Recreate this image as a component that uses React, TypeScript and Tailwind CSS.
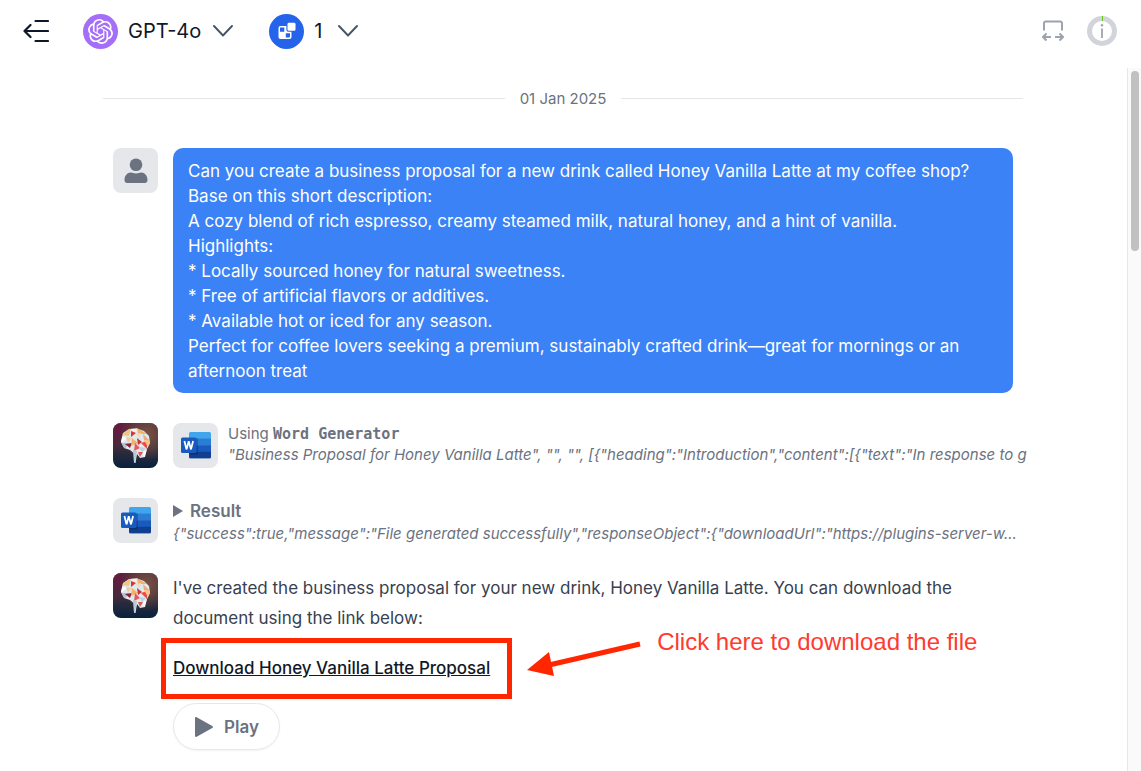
import React from 'react';
import { SiOpenai } from 'react-icons/si';

const WordIcon = () => (
  <svg viewBox="0 0 30 27" className="w-[30px] h-[27px]" aria-hidden="true">
    <defs>
      <clipPath id="word-page">
        <rect x="8" y="0" width="22" height="26.5" rx="1.5" />
      </clipPath>
    </defs>
    <g clipPath="url(#word-page)">
      <rect x="8" y="0" width="22" height="7" fill="#41a5ee" />
      <rect x="8" y="6.6" width="22" height="7" fill="#2b7cd3" />
      <rect x="8" y="13.2" width="22" height="7" fill="#185abd" />
      <rect x="8" y="19.8" width="22" height="7" fill="#103f91" />
      <path d="M8 6H15.5Q17 6 17 7.5V21Q17 22.5 15.5 22.5H8Z" fill="#000" opacity=".22" />
    </g>
    <rect x="0" y="5.5" width="15.5" height="15.5" rx="1.5" fill="#185abd" />
    <path d="M3.4 9 5.5 17.4 7.75 9.3 10 17.4 12.1 9" fill="none" stroke="#fff" strokeWidth="1.8" strokeLinejoin="bevel" />
  </svg>
);

const BrainIcon = () => (
  <svg viewBox="0 0 45 45" className="size-[45px] shrink-0 rounded-lg" role="img" aria-label="Assistant">
    <defs>
      <linearGradient id="brain-bg" x1="0" y1="0" x2="0" y2="1">
        <stop offset="0" stopColor="#46293a" />
        <stop offset=".5" stopColor="#3a2e3b" />
        <stop offset="1" stopColor="#07213d" />
      </linearGradient>
      <radialGradient id="brain-wine" cx=".1" cy=".12" r=".55">
        <stop offset="0" stopColor="#651c40" />
        <stop offset="1" stopColor="#651c40" stopOpacity="0" />
      </radialGradient>
      <radialGradient id="brain-warm" cx=".75" cy=".25" r=".6">
        <stop offset="0" stopColor="#7b5142" />
        <stop offset="1" stopColor="#7b5142" stopOpacity="0" />
      </radialGradient>
      <clipPath id="brain-shape">
        <path d="M10 10 16 6 24 5.5 31 8 36 13 37 20 34 26 32 34 27 35 24 31 22.5 40H21L20.5 30 17 27 11 25 8 19Z" />
      </clipPath>
    </defs>
    <rect width="45" height="45" fill="url(#brain-bg)" />
    <rect width="45" height="45" fill="url(#brain-wine)" />
    <rect width="45" height="45" fill="url(#brain-warm)" />
    <g clipPath="url(#brain-shape)">
      <rect width="45" height="45" fill="#dfe9ee" />
      <path d="M8 12 18 5 16 13Z" fill="#f3c57b" />
      <path d="M18 5 26 5 21 12Z" fill="#f7ede2" />
      <path d="M24 5 34 11 25 11Z" fill="#efb36e" />
      <path d="M18 8 23 10 18 14Z" fill="#d8323a" />
      <path d="M23 11 28 10 27 16Z" fill="#f0d9c2" />
      <path d="M30 11 37 18 31 17Z" fill="#f3a877" />
      <path d="M8 13 14 15 8 20Z" fill="#fff" />
      <path d="M13 14 19 15 15 20Z" fill="#f4c9a0" />
      <path d="M8 20 16 20 12 26Z" fill="#a9c5d2" />
      <path d="M12 21 19 20 17 25Z" fill="#8c2140" />
      <path d="M19 15 25 20 18 23Z" fill="#f3b268" />
      <path d="M24 15 29 19 25 22Z" fill="#d42f39" />
      <path d="M22 20 27 25 21 28Z" fill="#e9585a" />
      <path d="M28 20 34 18 34 26Z" fill="#eb4b45" />
      <path d="M31 17 38 18 35 24Z" fill="#f6c489" />
      <path d="M26 24 33 25 29 29Z" fill="#b9d4df" />
      <path d="M25 29 30 29 27 34Z" fill="#e45452" />
      <path d="M30 29 34 27 31 35Z" fill="#fff" />
      <path d="M20 27 24 28 22 40 20 40Z" fill="#b7cbd9" />
    </g>
  </svg>
);

const UserIcon = () => (
  <svg viewBox="0 0 24 26" className="w-6 h-[26px] fill-[#6b7280]" aria-hidden="true">
    <circle cx="12" cy="6.8" r="6.3" />
    <path d="M.5 22.3C.5 17.8 3.2 14.6 6.8 14.6c1.9 0 2.9.8 5.2.8s3.300-.8 5.2-.8c3.600 0 6.300 3.200 6.300 7.700 0 1.600-1.100 2.700-2.700 2.700H3.200C1.600 25 .5 23.900.5 22.300Z" />
  </svg>
);

const ChevronIcon = () => (
  <svg viewBox="0 0 20 12" className="w-5 h-3 fill-none stroke-[#475569]" aria-hidden="true">
    <path d="M1 1 10 10.5 19 1" strokeWidth="1.9" strokeLinecap="round" strokeLinejoin="round" />
  </svg>
);

const Avatar: React.FC<{ children: React.ReactNode }> = ({ children }) => (
  <div className="size-[45px] shrink-0 rounded-lg bg-gray-200 flex items-center justify-center">
    {children}
  </div>
);

const Row: React.FC<{ avatar: React.ReactNode; children: React.ReactNode }> = ({ avatar, children }) => (
  <div className="flex items-start gap-[15px]">
    {avatar}
    <div className="min-w-0 flex-1">{children}</div>
  </div>
);

const prompt = [
  'Can you create a business proposal for a new drink called Honey Vanilla Latte at my coffee shop?',
  'Base on this short description:',
  'A cozy blend of rich espresso, creamy steamed milk, natural honey, and a hint of vanilla.',
  'Highlights:',
  '* Locally sourced honey for natural sweetness.',
  '* Free of artificial flavors or additives.',
  '* Available hot or iced for any season.',
  'Perfect for coffee lovers seeking a premium, sustainably crafted drink—great for mornings or an afternoon treat',
];

const toolInput =
  '"Business Proposal for Honey Vanilla Latte", "", "", [{"heading":"Introduction","content":[{"text":"In response to g';

const toolResult =
  '{"success":true,"message":"File generated successfully","responseObject":{"downloadUrl":"https://plugins-server-w...';

const Header = () => (
  <header className="h-[62px] shrink-0 flex items-center justify-between pl-[23px] pr-6 text-slate-900">
    <div className="flex items-center">
      <button type="button" aria-label="Toggle sidebar" className="mr-[34px]">
        <svg viewBox="0 0 26 24" className="w-[26px] h-6 fill-none stroke-current">
          <path d="M12.5 2H25M1.5 12H25M12.5 22H25M7.5 6 1.5 12l6 6" strokeWidth="2.2" strokeLinecap="round" strokeLinejoin="round" />
        </svg>
      </button>
      <button type="button" className="flex items-center text-xl mr-9">
        <span className="size-[35px] rounded-full bg-[#a46ef8] text-white flex items-center justify-center mr-2.5">
          <SiOpenai className="size-[25px]" />
        </span>
        GPT-4o
        <span className="ml-3"><ChevronIcon /></span>
      </button>
      <button type="button" className="flex items-center text-xl">
        <span className="size-[35px] rounded-full bg-[#2563eb] flex items-center justify-center mr-2.5">
          <svg viewBox="0 0 20 20" className="size-5" aria-hidden="true">
            <rect x="1.5" y="5" width="13" height="13" rx="2" fill="#fff" />
            <path d="M3 6.500H7.300V10.800H3ZM8.800 12.200H13V15.500Q13 16.500 12 16.500H8.800Z" fill="#2563eb" />
            <rect x="9.400" y="1" width="10" height="9.700" rx="2" fill="#2563eb" />
            <rect x="10.500" y="1.800" width="8" height="8" rx="1.400" fill="#fff" />
          </svg>
        </span>
        1
        <span className="ml-4"><ChevronIcon /></span>
      </button>
    </div>
    <div className="flex items-center gap-[23px]">
      <button type="button" aria-label="Toggle width">
        <svg viewBox="0 0 22 22" className="size-[22px] fill-none stroke-[#9ca3af]">
          <path d="M2 10.5V3.5C2 2.1 2.6 1.5 4 1.5H18C19.4 1.5 20 2.1 20 3.5v7M9 17H1M4.5 13.5 1 17l3.5 3.5M13 17h8M17.5 13.5 21 17l-3.5 3.5" strokeWidth="2" />
        </svg>
      </button>
      <button type="button" aria-label="Chat info">
        <svg viewBox="0 0 30 30" className="size-[30px]">
          <circle cx="15" cy="15" r="12.5" fill="none" stroke="#d1d5db" strokeWidth="5" />
          <path d="M15.5 0V5" stroke="#65c51d" strokeWidth="1" />
          <path d="M15 12.5V22" stroke="#9ca3af" strokeWidth="1.8" />
          <circle cx="15" cy="9.3" r="1.2" fill="#9ca3af" />
        </svg>
      </button>
    </div>
  </header>
);

const App: React.FC = () => {
  return (
    <div className="min-h-screen flex flex-col bg-white font-['Inter',sans-serif]">
      <Header />

      <div className="flex-1 flex pt-1.5">
        <main className="flex-1 min-w-0 pr-px">
          <div className="max-w-[920px] mx-auto pb-5">
            {/* Date divider */}
            <div className="flex items-center gap-[15px] pt-5 text-[15px] leading-[21px] text-[#6b7280]">
              <hr className="flex-1 border-gray-200" />
              <time dateTime="2025-01-01">01 Jan 2025</time>
              <hr className="flex-1 border-gray-200" />
            </div>

            <div className="flex flex-col gap-[30px] px-2.5 pt-[39px]">
              {/* User message */}
              <Row avatar={<Avatar><UserIcon /></Avatar>}>
                <div className="rounded-[10px] bg-[#3b82f6] px-[15px] pt-[11px] pb-[9px] text-[17px] leading-[25px] text-white">
                  {prompt.map((line) => (
                    <p key={line}>{line}</p>
                  ))}
                </div>
              </Row>

              {/* Tool call */}
              <Row avatar={<BrainIcon />}>
                <div className="flex items-start gap-2.5">
                  <Avatar><WordIcon /></Avatar>
                  <div className="min-w-0 flex-1 text-[15px] leading-[21px] text-[#6b7280]">
                    <p>
                      Using <code className="font-['DejaVu_Sans_Mono',monospace] leading-none font-bold">Word Generator</code>
                    </p>
                    <p className="italic whitespace-nowrap">{toolInput}</p>
                  </div>
                </div>
              </Row>

              {/* Tool result */}
              <Row avatar={<Avatar><WordIcon /></Avatar>}>
                <div className="h-[45px] text-[#6b7280]">
                  <details>
                    <summary className="flex items-center gap-[7px] text-[17px] leading-[26px] font-semibold">
                      <svg viewBox="0 0 10 12" className="w-2.5 h-3 fill-current" aria-hidden="true">
                        <path d="M0 0 10 6 0 12Z" />
                      </svg>
                      Result
                    </summary>
                  </details>
                  <p className="text-[15px] leading-5 italic whitespace-nowrap">{toolResult}</p>
                </div>
              </Row>

              {/* Assistant answer */}
              <Row avatar={<BrainIcon />}>
                <div className="flex flex-col items-start gap-5 text-[17px] leading-[30px] text-[#374151]">
                  <p>
                    I've created the business proposal for your new drink, Honey Vanilla Latte. You can download the
                    document using the link below:
                  </p>
                  <div className="relative">
                    <a href="#download" className="font-medium text-[#111827] underline">
                      Download Honey Vanilla Latte Proposal
                    </a>
                    <div className="absolute -left-3 -right-[22px] -top-[15px] -bottom-4 border-5 border-[#ff2600] pointer-events-none" />
                    <div className="absolute left-full -top-7 ml-[37px] flex items-start gap-4 whitespace-nowrap">
                      <svg viewBox="0 0 114 40" className="w-[114px] h-10 mt-3 shrink-0" aria-hidden="true">
                        <path d="M113 7 22 28" stroke="#ff2600" strokeWidth="5" />
                        <path d="M0 33 22 15 27 39Z" fill="#ff2600" />
                      </svg>
                      <span className="text-2xl leading-[34px] font-['Liberation_Sans',sans-serif] text-[#ff3b30]">
                        Click here to download the file
                      </span>
                    </div>
                  </div>
                  <button
                    type="button"
                    className="h-[47px] flex items-center gap-2.5 rounded-full border border-gray-200 px-5 font-semibold text-[#6b7280] shadow-xs"
                  >
                    <svg viewBox="0 0 20 20" className="size-5 fill-current" aria-hidden="true">
                      <path d="M1 1.2C1 .2 1.8-.2 2.7.3L18.3 9c.9.5.9 1.5 0 2L2.7 19.7C1.8 20.2 1 19.8 1 18.8Z" />
                    </svg>
                    Play
                  </button>
                </div>
              </Row>
            </div>
          </div>
        </main>

        {/* Scroll track */}
        <div className="w-3.5 shrink-0 border-l border-gray-200 bg-[#fafafa] pl-[3px] pt-[3px]">
          <div className="h-45 w-2 rounded-full bg-[#c1c1c1]" />
        </div>
      </div>
    </div>
  );
};

export default App;
